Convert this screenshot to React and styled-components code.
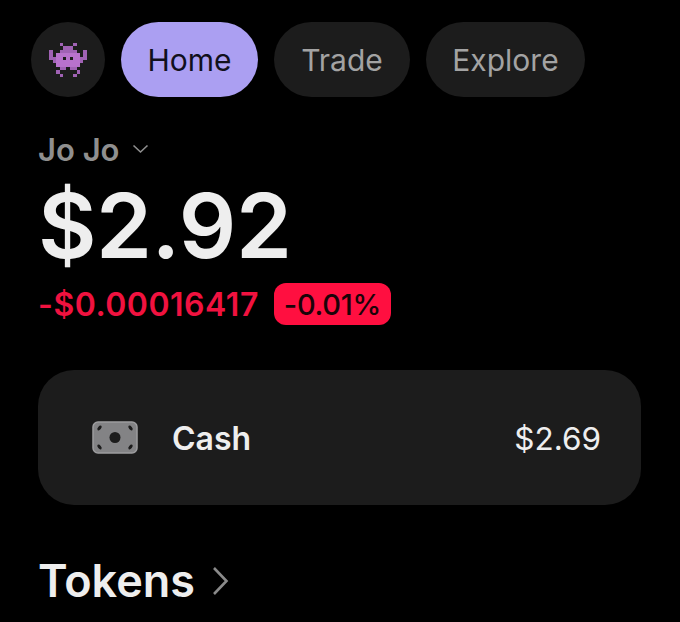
import React from "react";
import styled, { createGlobalStyle } from "styled-components";

const GlobalStyle = createGlobalStyle`
  html, body {
    margin: 0;
    height: 100%;
    background: #000;
    overflow: hidden;
  }
`;

const invaderRows = [
  "...#...#...",
  "....###....",
  "#..#####..#",
  "#.#######.#",
  "####.#.####",
  ".#########.",
  "..#######..",
  "...##.##...",
  "..#.....#..",
  "...#...#...",
];

function Invader() {
  return (
    <InvaderSvg width="40" height="34" viewBox="0 0 11 10" shapeRendering="crispEdges">
      {invaderRows.map((row, y) =>
        row.split("").map((c, x) =>
          c === "#" ? (
            <rect key={x + "-" + y} x={x} y={y} width="1" height="1" fill={y > 2 && y < 7 && x > 1 && x < 9 ? "#b872cc" : "#a062b4"} />
          ) : null
        )
      )}
    </InvaderSvg>
  );
}

function MoneyIcon() {
  return (
    <svg width="46" height="33" viewBox="0 0 46 33">
      <rect x="1" y="1" width="44" height="31" rx="5" fill="#838385" stroke="#9d9d9f" strokeWidth="1.5" />
      <circle cx="23" cy="16.5" r="5.5" fill="#1c1c1c" />
      <ellipse cx="7.5" cy="7" rx="1.6" ry="2.8" transform="rotate(40 7.5 7)" fill="#1c1c1c" />
      <ellipse cx="38.5" cy="7" rx="1.6" ry="2.8" transform="rotate(-40 38.5 7)" fill="#1c1c1c" />
      <ellipse cx="7.5" cy="26" rx="1.6" ry="2.8" transform="rotate(-40 7.5 26)" fill="#1c1c1c" />
      <ellipse cx="38.5" cy="26" rx="1.6" ry="2.8" transform="rotate(40 38.5 26)" fill="#1c1c1c" />
    </svg>
  );
}

export default function App() {
  return (
    <Page>
      <GlobalStyle />
      <Nav>
        <Avatar>
          <Invader />
        </Avatar>
        <Tab $active $width={137}>Home</Tab>
        <Tab $width={136}>Trade</Tab>
        <Tab $width={159}>Explore</Tab>
      </Nav>
      <Account>
        <AccountName>Jo Jo</AccountName>
        <svg width="17" height="10" viewBox="0 0 17 10" fill="none">
          <path d="M1.5 1.5 L8.5 8 L15.5 1.5" stroke="#8f8f8f" strokeWidth="1.6" />
        </svg>
      </Account>
      <Balance>$2.92</Balance>
      <Change>
        <ChangeValue>-$0.00016417</ChangeValue>
        <ChangeBadge>-0.01%</ChangeBadge>
      </Change>
      <CashCard>
        <MoneyIcon />
        <CashLabel>Cash</CashLabel>
        <CashValue>$2.69</CashValue>
      </CashCard>
      <SectionTitle>
        Tokens
        <svg width="17" height="30" viewBox="0 0 17 30" fill="none">
          <path d="M2 2 L14.5 15 L2 28" stroke="#8a8a8a" strokeWidth="2.6" />
        </svg>
      </SectionTitle>
    </Page>
  );
}

const Page = styled.div`
  box-sizing: border-box;
  width: 680px;
  height: 622px;
  padding: 22px 39px 0 38px;
  background: #000;
  font-family: Inter, "Liberation Sans", sans-serif;
  overflow: hidden;
`;

const Nav = styled.div`
  display: flex;
  gap: 16px;
  margin-left: -7px;
`;

const Avatar = styled.div`
  width: 74px;
  height: 75px;
  border-radius: 50%;
  background: #1c1c1c;
  display: flex;
  align-items: center;
  justify-content: center;
`;

const InvaderSvg = styled.svg`
  filter: blur(0.5px);
`;

const Tab = styled.div`
  width: ${(p) => p.$width}px;
  height: 75px;
  border-radius: 38px;
  background: ${(p) => (p.$active ? "#ab9ff2" : "#1c1c1c")};
  color: ${(p) => (p.$active ? "#11101c" : "#a3a3a3")};
  font-size: 30px;
  display: flex;
  align-items: center;
  justify-content: center;
`;

const Account = styled.div`
  display: flex;
  align-items: center;
  gap: 12px;
  margin-top: 33px;
  height: 38px;
`;

const AccountName = styled.span`
  font-size: 31px;
  font-weight: 600;
  color: #8f8f8f;
`;

const Balance = styled.div`
  font-size: 90px;
  font-weight: 600;
  line-height: 92px;
  color: #eeeeee;
  margin-top: 12px;
  letter-spacing: -0.5px;
`;

const Change = styled.div`
  display: flex;
  align-items: center;
  gap: 15px;
  margin-top: 11px;
`;

const ChangeValue = styled.span`
  font-size: 32px;
  font-weight: 600;
  letter-spacing: 0.5px;
  color: #f0123f;
`;

const ChangeBadge = styled.span`
  width: 117px;
  height: 42px;
  border-radius: 12px;
  background: #ff0f40;
  color: #1a0308;
  font-size: 29px;
  font-weight: 500;
  letter-spacing: -0.3px;
  display: flex;
  align-items: center;
  justify-content: center;
`;

const CashCard = styled.div`
  display: flex;
  align-items: center;
  height: 135px;
  margin-top: 45px;
  padding: 0 40px 0 54px;
  border-radius: 36px;
  background: #1c1c1c;
`;

const CashLabel = styled.span`
  margin-left: 34px;
  padding-top: 2px;
  font-size: 32px;
  font-weight: 600;
  color: #eeeeee;
`;

const CashValue = styled.span`
  margin-left: auto;
  padding-top: 2px;
  font-size: 31.5px;
  color: #eeeeee;
`;

const SectionTitle = styled.div`
  display: flex;
  align-items: center;
  gap: 17px;
  margin-top: 49px;
  font-size: 45px;
  font-weight: 600;
  line-height: 54px;
  color: #eeeeee;
`;
